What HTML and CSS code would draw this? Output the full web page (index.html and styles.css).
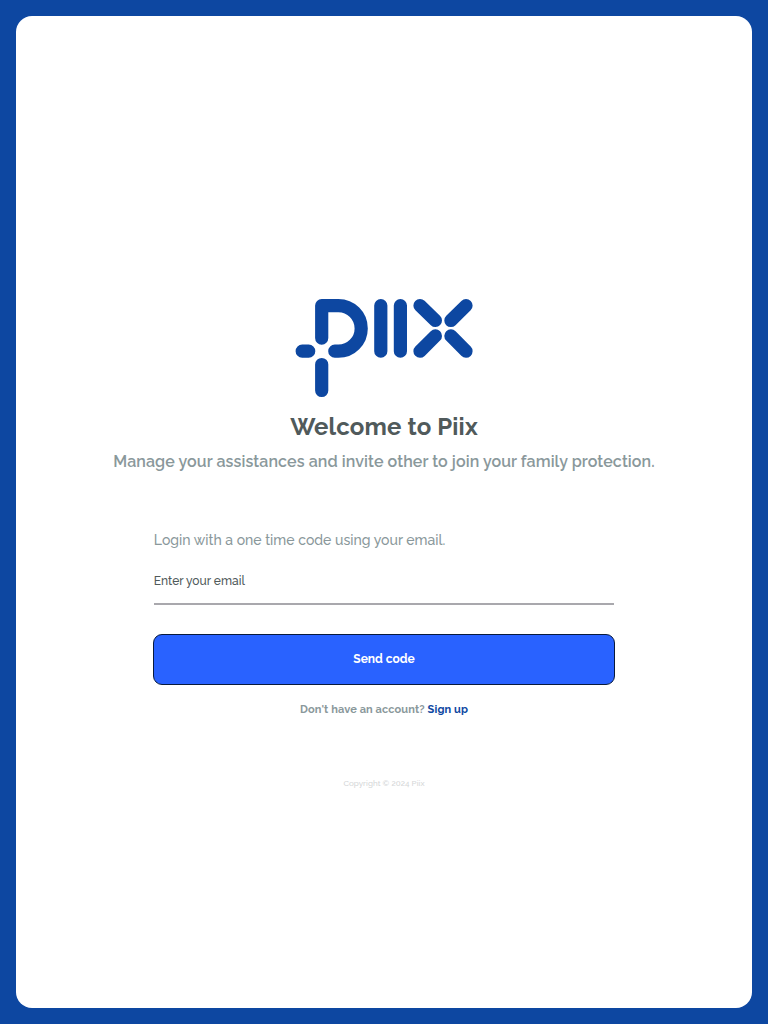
FILE: index.html
```html
<!DOCTYPE html>
<html lang="en">
<head>
<meta charset="utf-8">
<meta name="viewport" content="width=device-width, initial-scale=1">
<title>Piix</title>
<link rel="stylesheet" href="styles.css">
</head>
<body>
<main class="card">
  <svg class="logo" viewBox="295 298 178 100" role="img" aria-label="Piix">
    <path d="M321.7 338.1V305.6H338.4a22.8 22.8 0 0 1 0 45.6H334.8M302.2 351.2h6.5M321.7 364.5v26M380.8 305.6v45.6M400.4 305.6v45.6M420 305.6l15.4 14.9M466 305.6l-15.1 14.9M420 351.2l15.4-15.3M466 351.2l-15.1-15.3"/>
  </svg>
  <h1 class="title"><span>Welcome to Piix</span></h1>
  <p class="subtitle"><span>Manage your assistances and invite other to join your family protection.</span></p>
  <form class="form">
    <p class="hint"><span>Login with a one time code using your email.</span></p>
    <label class="field"><span>Enter your email</span></label>
    <button class="submit" type="button"><span>Send code</span></button>
  </form>
  <p class="signup"><span>Don't have an account?</span> <a class="link">Sign up</a></p>
  <footer class="copyright"><span>Copyright © 2024 Piix</span></footer>
</main>
</body>
</html>
```

FILE: styles.css
```css
* { box-sizing: border-box; }
body {
  margin: 0;
  height: 100vh;
  padding: 16px;
  background: #0d47a1;
  font-family: Raleway, Lato, sans-serif;
}
.card {
  height: 100%;
  border-radius: 16px;
  background: #fff;
  display: flex;
  flex-direction: column;
  align-items: center;
  padding-top: 282px;
}
.logo {
  width: 178px;
  height: 100px;
  flex: none;
  fill: none;
  stroke: #0d47a1;
  stroke-width: 13.2;
  stroke-linecap: round;
  stroke-linejoin: round;
}
h1, p { margin: 0; white-space: nowrap; }
.title {
  margin-top: 14px;
  font-size: 24px;
  line-height: 30px;
  font-weight: 700;
  letter-spacing: 0.15px;
  color: #505a5b;
}
.subtitle {
  margin-top: 10px;
  font-size: 16px;
  line-height: 20px;
  font-weight: 600;
  letter-spacing: 0.1px;
  color: #8a989b;
}
.form {
  width: 460.4px;
  margin-top: 58px;
  display: flex;
  flex-direction: column;
}
.hint {
  font-size: 14px;
  line-height: 20px;
  font-weight: 500;
  letter-spacing: 0.02px;
  color: #8a989b;
}
.field {
  margin-top: 22px;
  height: 33px;
  border-bottom: 2px solid #a9a8ad;
  font-size: 12px;
  line-height: 18px;
  font-weight: 500;
  color: #505a5b;
}
.submit {
  margin: 29px -1px 0;
  height: 51px;
  padding: 0 0 2px;
  border: 1px solid #081a3c;
  border-radius: 9px;
  background: #2962ff;
  color: #fff;
  font: 700 12px/18px Raleway, Lato, sans-serif;
}
.signup {
  margin-top: 17px;
  font-size: 11px;
  line-height: 16px;
  font-weight: 700;
  letter-spacing: 0.12px;
  color: #8a989b;
}
.link { color: #0d47a1; }
.copyright {
  margin-top: 59px;
  font-size: 8px;
  line-height: 12px;
  font-weight: 500;
  letter-spacing: 0.05px;
  color: #d4d6d7;
}
```
